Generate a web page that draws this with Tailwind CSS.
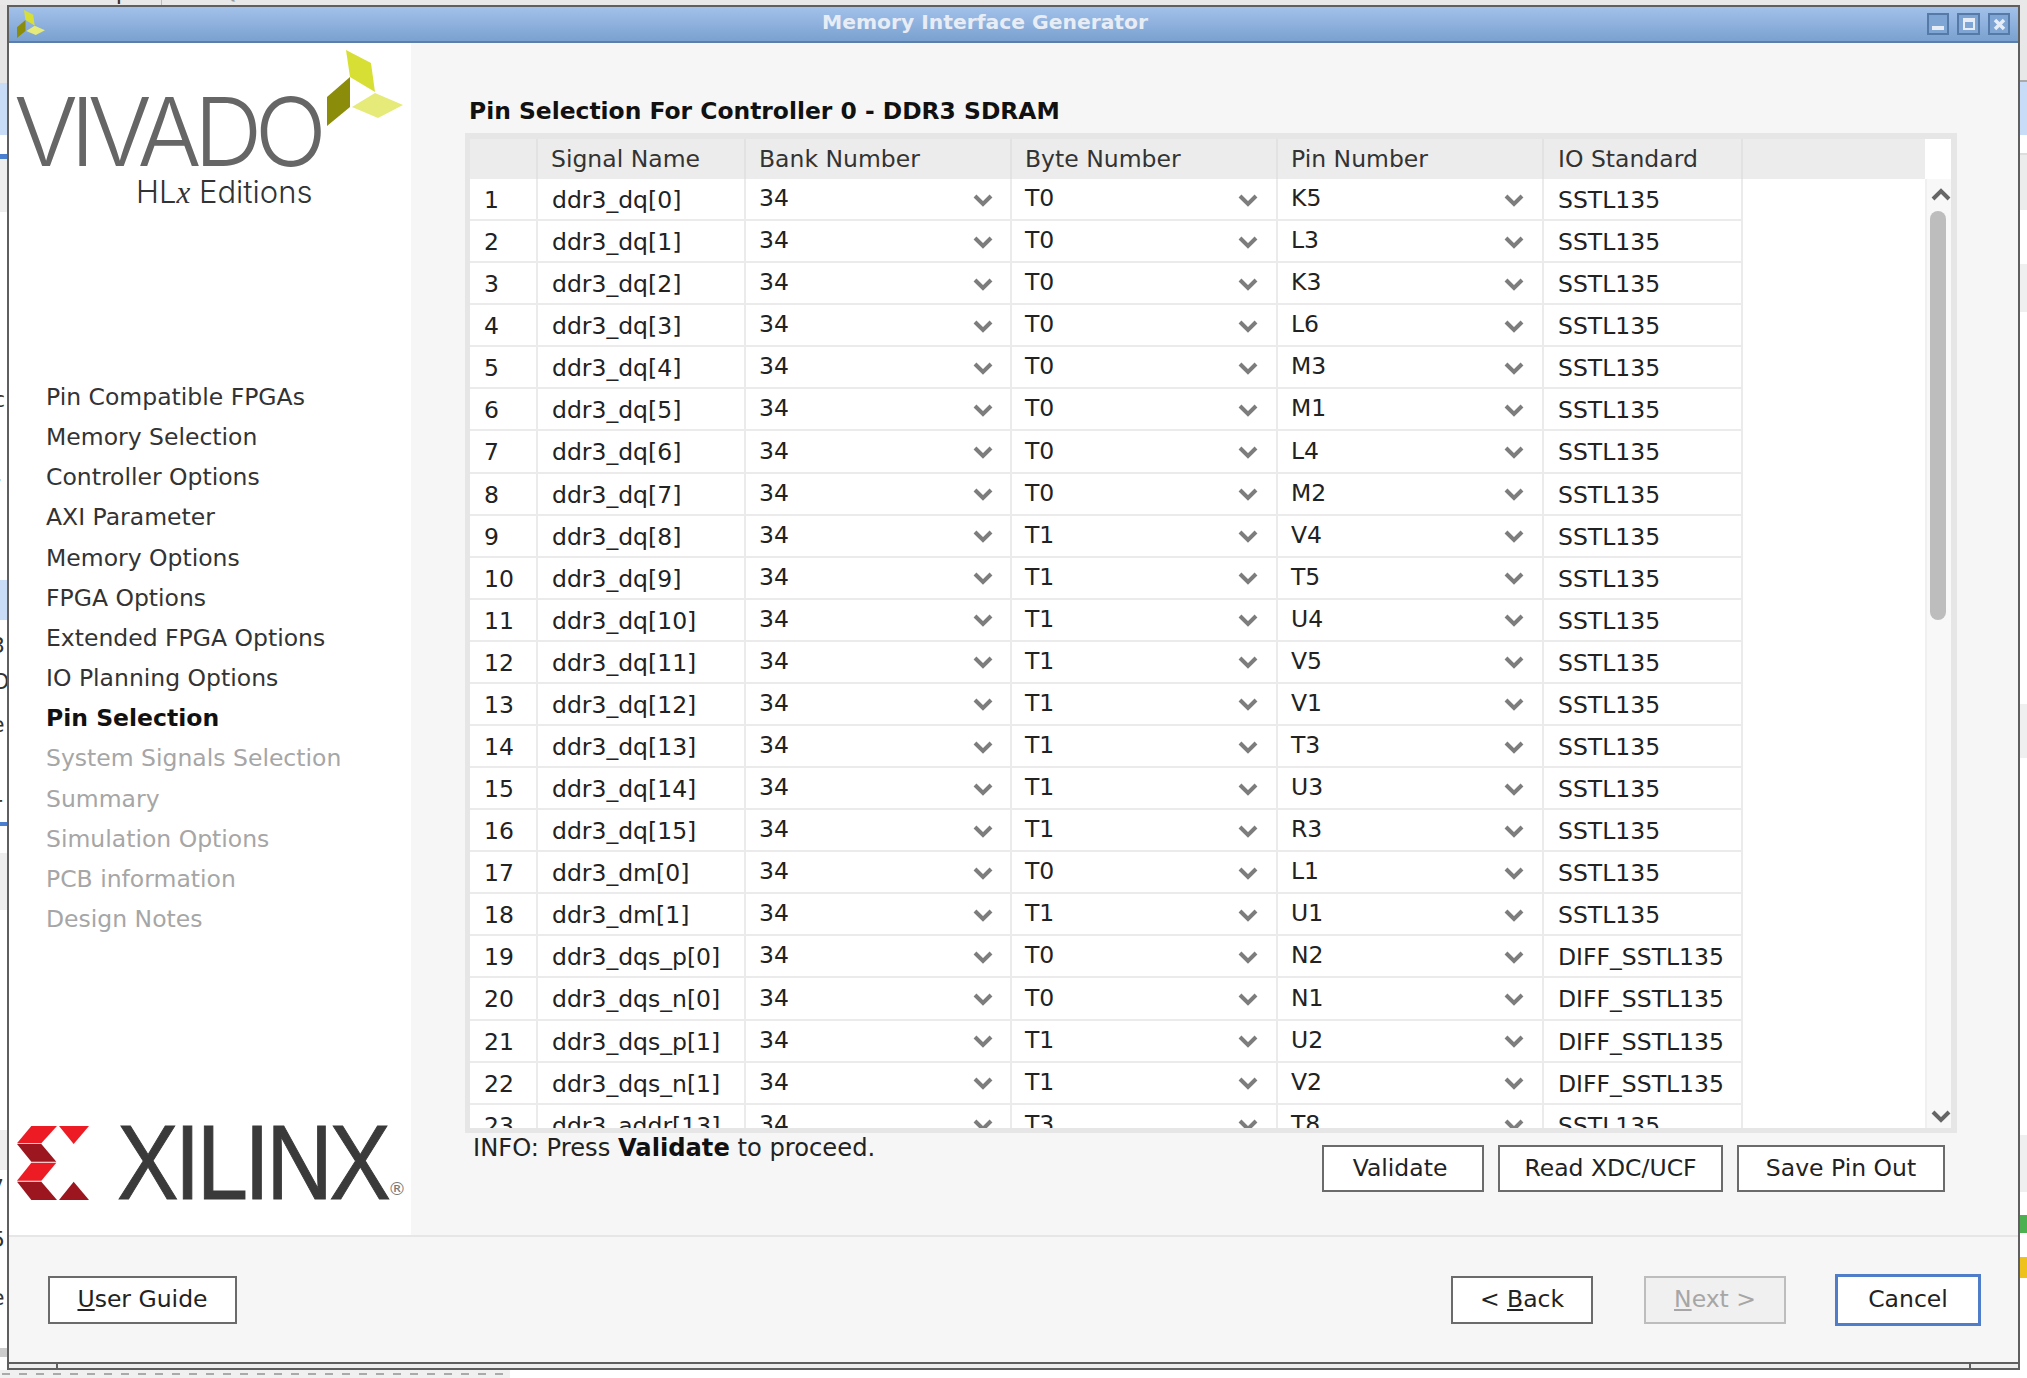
<!DOCTYPE html>
<html lang="en">
<head>
<meta charset="UTF-8">
<title>Memory Interface Generator</title>
<script src="https://cdn.jsdelivr.net/npm/@tailwindcss/browser@4"></script>
</head>
<body class="relative w-[2027px] h-[1378px] overflow-hidden bg-white font-['DejaVu_Sans',sans-serif] text-[#222]">

<!-- application behind the dialog: only its edges show -->
<div class="absolute left-0 top-0 w-full h-[5px] bg-[#e8e8e8] overflow-hidden text-[23px] leading-[28px] text-[#333]">
  <span class="absolute left-[3px] top-[-23px]">ew</span>
  <span class="absolute left-[78px] top-[-23px]">Help</span>
  <div class="absolute left-[161px] top-0 w-[1px] h-[5px] bg-[#bbb]"></div>
  <span class="absolute left-[220px] top-[-23px] text-[#999]">Quick Access</span>
</div>
<div class="absolute left-0 top-[5px] w-[7px] h-[1357px] flex flex-col bg-white">
  <div class="h-[78px] bg-[#e5e5e5]"></div>
  <div class="h-[52px] bg-[#c9dcf7]"></div>
  <div class="h-[19px]"></div>
  <div class="h-[5px] bg-[#4a7fd0]"></div>
  <div class="h-[53px] bg-[#eee]"></div>
  <div class="h-[368px]"></div>
  <div class="h-[40px] bg-[#c9dcf7]"></div>
  <div class="h-[202px]"></div>
  <div class="h-[4px] bg-[#4a7fd0]"></div>
  <div class="h-[27px]"></div>
  <div class="h-[57px] bg-[#eee]"></div>
  <div class="h-[220px]"></div>
  <div class="h-[40px] bg-[#eee]"></div>
  <div class="h-[178px]"></div>
  <div class="h-[9px] bg-[#ccc]"></div>
</div>
<div class="absolute left-0 top-0 w-[7px] h-[1378px] overflow-hidden text-[22px] leading-[26px] text-[#333]">
  <span class="absolute left-[-7px] top-[387px]">c</span>
  <span class="absolute left-[-9px] top-[471px]">r</span>
  <span class="absolute left-[-9px] top-[633px]">3</span>
  <span class="absolute left-[-8px] top-[669px]">O</span>
  <span class="absolute left-[-9px] top-[712px]">e</span>
  <span class="absolute left-[-7px] top-[792px]">r</span>
  <span class="absolute left-[-10px] top-[1175px]">7</span>
  <span class="absolute left-[-9px] top-[1227px]">5</span>
  <span class="absolute left-[-9px] top-[1285px]">e</span>
</div>
<div class="absolute left-[2020px] top-[5px] w-[7px] h-[1365px] flex flex-col bg-white">
  <div class="h-[77px] bg-[#e8e8e8] border-b-2 border-[#aaa]"></div>
  <div class="h-[53px] bg-[#c9dcf7]"></div>
  <div class="h-[20px] border-b-2 border-[#ddd]"></div>
  <div class="h-[55px] bg-[#ececec]"></div>
  <div class="h-[54px]"></div>
  <div class="h-[48px] bg-[#efefef]"></div>
  <div class="h-[392px]"></div>
  <div class="h-[54px] bg-[#efefef]"></div>
  <div class="h-[377px]"></div>
  <div class="h-[57px] bg-[#efefef]"></div>
  <div class="h-[23px]"></div>
  <div class="h-[18px] bg-[#4caf50]"></div>
  <div class="h-[24px]"></div>
  <div class="h-[21px] bg-[#eec21a]"></div>
</div>
<div class="absolute left-0 top-[1370px] w-[510px] h-[8px] flex items-center gap-[9px] pl-[2px] overflow-hidden bg-[#f0f0f0]" id="dashes"></div>

<!-- dialog -->
<div class="absolute left-[7px] top-[5px] w-[2013px] h-[1365px] border-x-2 border-t-2 border-[#5f5f5f] flex flex-col bg-[#f6f6f6]">
  <div class="relative h-[36px] shrink-0 flex items-center bg-gradient-to-b from-[#a2c1ea] to-[#7aa1d0] border-b-2 border-[#5b7eab]">
    <svg class="ml-[8px] w-[28px] h-[28px]" viewBox="327 50 76 76">
      <polygon points="346,50 371,63 375,92 350,77" fill="#d7df35"/>
      <polygon points="350,77 350,107 327,126 327,97" fill="#8a8c0a"/>
      <polygon points="375,93 403,105 378,118 352,107" fill="#e6ea78"/>
    </svg>
    <div class="absolute inset-0 flex items-center justify-center pr-[57px] pb-[4px] text-[20.3px] font-bold text-[#e8edf5]">Memory Interface Generator</div>
    <div class="relative ml-auto mr-[8px] flex gap-[8px]">
      <div class="w-[22px] h-[22px] border-2 border-[#567aa8] bg-[#7ea5d4] flex items-end justify-center pb-[3px]"><div class="w-[12px] h-[4px] bg-[#e8edf5]"></div></div>
      <div class="w-[23px] h-[22px] border-2 border-[#567aa8] bg-[#7ea5d4] flex items-center justify-center"><div class="w-[12px] h-[12px] border-2 border-t-4 border-[#e8edf5]"></div></div>
      <div class="w-[22px] h-[22px] border-2 border-[#567aa8] bg-[#7ea5d4] flex items-center justify-center">
        <svg class="w-[13px] h-[13px]" viewBox="0 0 13 13"><path d="M2 2 L11 11 M11 2 L2 11" stroke="#e8edf5" stroke-width="3.5"/></svg>
      </div>
    </div>
  </div>

  <div class="h-[1192px] shrink-0 flex">
    <!-- left rail -->
    <div class="relative w-[402px] shrink-0 bg-white pl-[37px] pt-[334px]">
      <div class="absolute left-[5px] top-[41px] text-[95px] leading-none font-['Inter',sans-serif] font-light tracking-[-0.08em] text-[#666]">VIVADO</div>
      <div class="absolute left-[127px] top-[133px] text-[31px] leading-none font-['Inter',sans-serif] font-light text-[#333]">HL<i class="font-['Liberation_Serif',serif]">x</i> Editions</div>
      <svg class="absolute left-0 top-0 w-[402px] h-[100px]" viewBox="9 43 402 100">
        <polygon points="346,50 371,63 375,92 350,77" fill="#d7df35"/>
        <polygon points="350,77 350,107 327,126 327,97" fill="#8a8c0a"/>
        <polygon points="375,93 403,105 378,118 352,107" fill="#e6ea78"/>
      </svg>
      <nav class="flex flex-col text-[23.5px] leading-[40.15px] text-[#333]">
        <span>Pin Compatible FPGAs</span>
        <span>Memory Selection</span>
        <span>Controller Options</span>
        <span>AXI Parameter</span>
        <span>Memory Options</span>
        <span>FPGA Options</span>
        <span>Extended FPGA Options</span>
        <span>IO Planning Options</span>
        <span class="font-bold text-[#111]">Pin Selection</span>
        <span class="text-[#a6a6a6]">System Signals Selection</span>
        <span class="text-[#a6a6a6]">Summary</span>
        <span class="text-[#a6a6a6]">Simulation Options</span>
        <span class="text-[#a6a6a6]">PCB information</span>
        <span class="text-[#a6a6a6]">Design Notes</span>
      </nav>
      <svg class="absolute left-[8px] top-[1083px] w-[72px] h-[74px]" viewBox="52 108 216 222">
        <polygon points="95,108 172,108 125,160 52,160" fill="#ed1c24"/>
        <polygon points="52,162 125,162 170,215 95,215" fill="#9c1620"/>
        <polygon points="95,218 170,218 125,272 52,272" fill="#ed1c24"/>
        <polygon points="52,275 125,275 172,330 95,330" fill="#9c1620"/>
        <polygon points="178,108 268,108 222,162" fill="#ed1c24"/>
        <polygon points="178,330 222,275 268,330" fill="#9c1620"/>
      </svg>
      <div class="absolute left-[108px] top-[1056px] origin-left scale-x-[0.87] text-[106px] leading-[1.2] font-['Liberation_Sans',sans-serif] tracking-[-0.04em] text-[#3a3a3a] [-webkit-text-stroke:1px_#3a3a3a]">XILINX</div>
      <div class="absolute left-[379px] top-[1132px] text-[18px] text-[#777]">®</div>
    </div>

    <!-- main -->
    <div class="flex-1 min-w-0 pl-[54px] pr-[61px] flex flex-col">
      <div class="h-[90px] shrink-0 flex items-end pl-[4px] pb-[8px] text-[23.4px] leading-[28px] font-bold text-[#111]">Pin Selection For Controller 0 - DDR3 SDRAM</div>

      <div class="h-[1000px] shrink-0 border-l-[5px] border-t-[6px] border-r-[6px] border-b-[5px] border-[#e6e6e6] flex overflow-hidden bg-white">
        <div class="flex-1 min-w-0 overflow-hidden text-[23.5px]">
          <div class="h-[40px] flex items-center bg-[#ececec] text-[#333]">
            <div class="w-[68px] h-full shrink-0 border-r-2 border-[#e2e2e2]"></div>
            <div class="w-[208px] h-full shrink-0 border-r-2 border-[#e2e2e2] pl-[13px] leading-[40px]">Signal Name</div>
            <div class="w-[266px] h-full shrink-0 border-r-2 border-[#e2e2e2] pl-[13px] leading-[40px]">Bank Number</div>
            <div class="w-[266px] h-full shrink-0 border-r-2 border-[#e2e2e2] pl-[13px] leading-[40px]">Byte Number</div>
            <div class="w-[266px] h-full shrink-0 border-r-2 border-[#e2e2e2] pl-[13px] leading-[40px]">Pin Number</div>
            <div class="w-[199px] h-full shrink-0 border-r-2 border-[#e2e2e2] pl-[14px] leading-[40px]">IO Standard</div>
          </div>
          <div id="rows"></div>
        </div>
        <!-- scrollbar -->
        <div class="relative w-[26px] shrink-0">
          <div class="h-[40px] bg-white"></div>
          <div class="absolute left-0 top-[40px] bottom-0 w-full border-l-2 border-[#f0f0f0] bg-[#f8f8f8]">
            <svg class="absolute left-[4px] top-[9px] w-[20px] h-[13px]" viewBox="0 0 20 13"><path d="M2 11 L10 3 L18 11" fill="none" stroke="#666" stroke-width="4"/></svg>
            <div class="absolute left-[3px] top-[32px] w-[16px] h-[409px] rounded-full bg-[#bdbdbd]"></div>
            <svg class="absolute left-[4px] top-[931px] w-[20px] h-[13px]" viewBox="0 0 20 13"><path d="M2 2 L10 10 L18 2" fill="none" stroke="#666" stroke-width="4"/></svg>
          </div>
        </div>
      </div>

      <div class="flex-1 flex justify-between pr-[12px]">
        <div class="pl-[8px] text-[24.2px] leading-[30px]">INFO: Press <b class="font-bold text-[#111]">Validate</b> to proceed.</div>
        <div class="flex gap-[14px] pt-[12px] text-[23.5px] text-[#222]">
          <button class="w-[162px] h-[47px] border-2 border-[#6b6b6b] bg-white pr-[6px]">Validate</button>
          <button class="w-[225px] h-[47px] border-2 border-[#6b6b6b] bg-white">Read XDC/UCF</button>
          <button class="w-[208px] h-[47px] border-2 border-[#6b6b6b] bg-white">Save Pin Out</button>
        </div>
      </div>
    </div>
  </div>

  <!-- footer buttons -->
  <div class="h-[127px] shrink-0 border-t-2 border-[#e6e6e6] flex items-center pl-[39px] pr-[37px] text-[23.5px] text-[#222]">
    <button class="w-[189px] h-[48px] border-2 border-[#6b6b6b] bg-white"><u>U</u>ser Guide</button>
    <button class="ml-auto w-[142px] h-[48px] border-2 border-[#6b6b6b] bg-white">&lt; <u>B</u>ack</button>
    <button class="ml-[51px] w-[142px] h-[48px] border-2 border-[#bdbdbd] bg-[#f0f0f0] text-[#a6a6a6]"><u>N</u>ext &gt;</button>
    <button class="ml-[49px] w-[146px] h-[52px] border-[3px] border-[#4f7dc9] bg-white">Cancel</button>
  </div>

  <!-- window bottom grip -->
  <div class="h-[8px] shrink-0 flex border-y-2 border-[#5f5f5f] bg-[#eeeeee]">
    <div class="w-[49px] border-r-2 border-[#5f5f5f]"></div>
    <div class="flex-1"></div>
    <div class="w-[49px] border-l-2 border-[#5f5f5f]"></div>
  </div>
</div>

<script>
  // [signal, byte, pin, standard] - bank is always 34
  const pins = [
    ['ddr3_dq[0]', 'T0', 'K5', 'SSTL135'], ['ddr3_dq[1]', 'T0', 'L3', 'SSTL135'],
    ['ddr3_dq[2]', 'T0', 'K3', 'SSTL135'], ['ddr3_dq[3]', 'T0', 'L6', 'SSTL135'],
    ['ddr3_dq[4]', 'T0', 'M3', 'SSTL135'], ['ddr3_dq[5]', 'T0', 'M1', 'SSTL135'],
    ['ddr3_dq[6]', 'T0', 'L4', 'SSTL135'], ['ddr3_dq[7]', 'T0', 'M2', 'SSTL135'],
    ['ddr3_dq[8]', 'T1', 'V4', 'SSTL135'], ['ddr3_dq[9]', 'T1', 'T5', 'SSTL135'],
    ['ddr3_dq[10]', 'T1', 'U4', 'SSTL135'], ['ddr3_dq[11]', 'T1', 'V5', 'SSTL135'],
    ['ddr3_dq[12]', 'T1', 'V1', 'SSTL135'], ['ddr3_dq[13]', 'T1', 'T3', 'SSTL135'],
    ['ddr3_dq[14]', 'T1', 'U3', 'SSTL135'], ['ddr3_dq[15]', 'T1', 'R3', 'SSTL135'],
    ['ddr3_dm[0]', 'T0', 'L1', 'SSTL135'], ['ddr3_dm[1]', 'T1', 'U1', 'SSTL135'],
    ['ddr3_dqs_p[0]', 'T0', 'N2', 'DIFF_SSTL135'], ['ddr3_dqs_n[0]', 'T0', 'N1', 'DIFF_SSTL135'],
    ['ddr3_dqs_p[1]', 'T1', 'U2', 'DIFF_SSTL135'], ['ddr3_dqs_n[1]', 'T1', 'V2', 'DIFF_SSTL135'],
    ['ddr3_addr[13]', 'T3', 'T8', 'SSTL135'],
  ];

  const chevron = '<svg class="w-[20px] h-[13px] shrink-0 mt-[2px]" viewBox="0 0 20 13"><path d="M2 2 L10 10 L18 2" fill="none" stroke="#7d7d7d" stroke-width="4"/></svg>';

  document.getElementById('rows').innerHTML = pins.map((p, i) => `
    <div class="h-[42.08px] flex items-stretch text-[#222]">
      <div class="w-[68px] shrink-0 border-r-2 border-b-2 border-[#ebebeb] pl-[14px] leading-[42px]">${i + 1}</div>
      <div class="w-[208px] shrink-0 border-r-2 border-b-2 border-[#ebebeb] pl-[14px] leading-[42px]">${p[0]}</div>
      <div class="w-[266px] shrink-0 border-r-2 border-b-2 border-[#ebebeb] pl-[13px] pr-[17px] flex justify-between items-center"><span class="leading-[36px] mb-[2px]">34</span>${chevron}</div>
      <div class="w-[266px] shrink-0 border-r-2 border-b-2 border-[#ebebeb] pl-[13px] pr-[18px] flex justify-between items-center"><span class="leading-[36px] mb-[2px]">${p[1]}</span>${chevron}</div>
      <div class="w-[266px] shrink-0 border-r-2 border-b-2 border-[#ebebeb] pl-[13px] pr-[18px] flex justify-between items-center"><span class="leading-[36px] mb-[2px]">${p[2]}</span>${chevron}</div>
      <div class="w-[199px] shrink-0 border-r-2 border-b-2 border-[#ebebeb] pl-[14px] leading-[42px]">${p[3]}</div>
    </div>`).join('');

  // dashed edge under the dialog
  document.getElementById('dashes').innerHTML = Array.from({ length: 30 }, () =>
    '<div class="w-[8px] h-[2px] shrink-0 bg-[#aaa]"></div>').join('');
</script>
</body>
</html>
